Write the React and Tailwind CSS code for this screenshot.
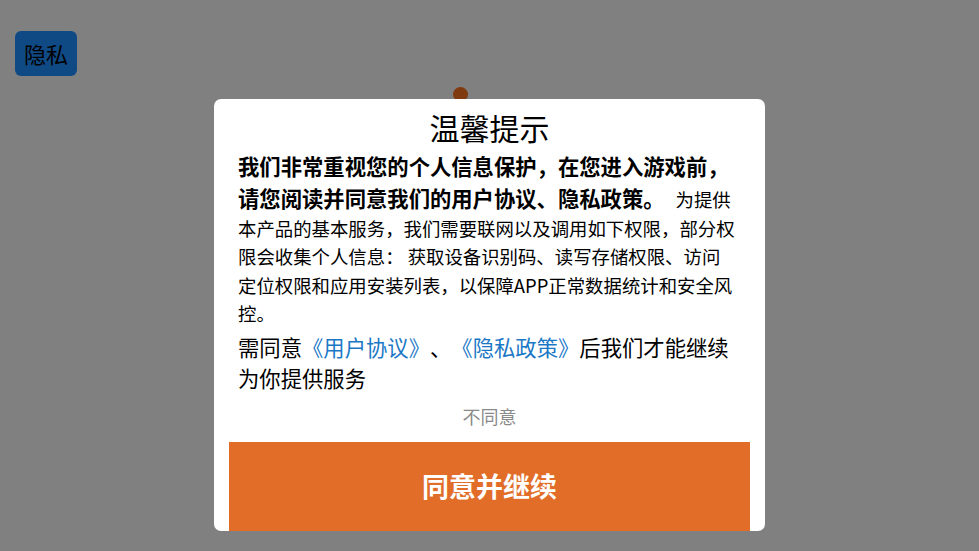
const font = { fontFamily: '"Noto Sans CJK SC", "Noto Sans", sans-serif' };

const PrivacyDialog = () => {
  return (
    <div className="relative mx-auto mt-[23px] w-[551px]">
      {/* the little orange dot peeking out behind the dialog */}
      <div className="absolute left-[239px] top-[-12px] h-[15px] w-[15px] rounded-full bg-[#7f3a10]" />

      <div className="relative z-10 overflow-hidden rounded-[7px] bg-white">
        <h2 className="pt-[6px] text-center text-[30px] leading-[45px] text-black">温馨提示</h2>

        <p className="pl-6 pr-7 text-[18.4px] leading-[28.3px] text-black">
          <span className="text-[21.33px] font-bold leading-[1.5]">
            我们非常重视您的个人信息保护，在您进入游戏前，请您阅读并同意我们的用户协议、隐私政策。
          </span>
          <span className="ml-[11px]">
            为提供本产品的基本服务，我们需要联网以及调用如下权限，部分权限会收集个人信息： 获取设备识别码、读写存储权限、访问定位权限和应用安装列表，以保障APP正常数据统计和安全风控。
          </span>
        </p>

        <p className="mt-[4px] pl-6 pr-7 text-[21.33px] leading-[31px] text-black">
          需同意<a className="text-[#1a78c6]">《用户协议》</a>、<a className="text-[#1a78c6]">《隐私政策》</a>后我们才能继续为你提供服务
        </p>

        <button
          type="button"
          className="mx-auto mt-[10px] block text-[18px] leading-[27px] text-[#8a8a8a]"
        >
          不同意
        </button>

        <button
          type="button"
          className="mx-[15px] mt-[12px] flex h-[89px] w-[521px] items-center justify-center bg-[#e16d29] text-[27px] font-bold text-white"
        >
          同意并继续
        </button>
      </div>
    </div>
  );
};

export default function App() {
  return (
    <div
      className="h-[551px] w-full overflow-hidden bg-[#808080] [text-spacing-trim:space-all]"
      style={font}
    >
      <div className="pl-[15px] pt-[31px]">
        <button
          type="button"
          className="flex h-[45px] w-[62px] items-center justify-center rounded-[6px] bg-[#104a84] text-[22px] text-black"
        >
          隐私
        </button>
      </div>
      <PrivacyDialog />
    </div>
  );
}
